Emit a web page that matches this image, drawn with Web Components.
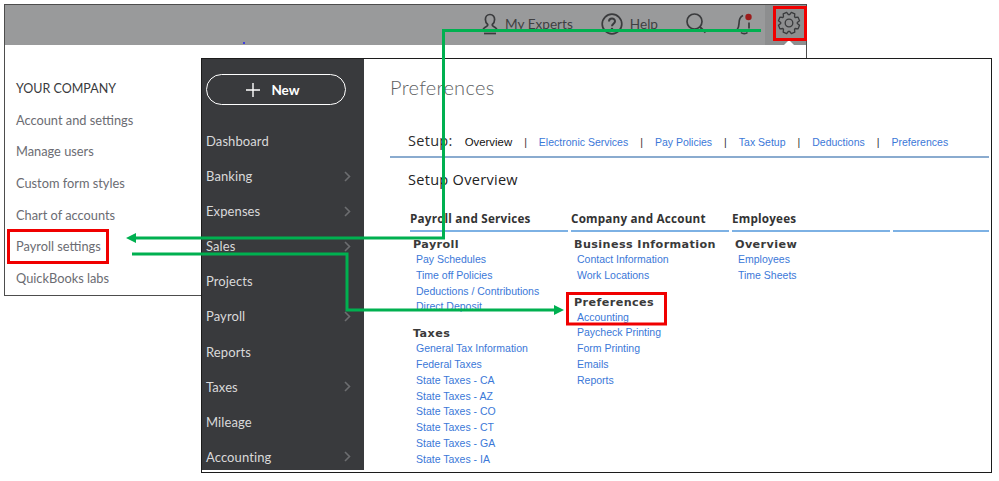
<!DOCTYPE html>
<html lang="en">
<head>
<meta charset="utf-8">
<title>Payroll settings</title>
<style>
html, body { margin: 0; padding: 0; background: #fff; }
body { width: 999px; height: 481px; position: relative; overflow: hidden; font-family: "Lato", sans-serif; }
</style>
</head>
<body>
<settings-window>
    <menu-item heading>YOUR COMPANY</menu-item>
    <menu-item>Account and settings</menu-item>
    <menu-item>Manage users</menu-item>
    <menu-item>Custom form styles</menu-item>
    <menu-item>Chart of accounts</menu-item>
    <menu-item>Payroll settings</menu-item>
    <menu-item>QuickBooks labs</menu-item>
</settings-window>

<prefs-window>
    <side-nav slot="nav">
        <nav-item>Dashboard</nav-item>
        <nav-item arrow>Banking</nav-item>
        <nav-item arrow>Expenses</nav-item>
        <nav-item arrow>Sales</nav-item>
        <nav-item>Projects</nav-item>
        <nav-item arrow>Payroll</nav-item>
        <nav-item>Reports</nav-item>
        <nav-item arrow>Taxes</nav-item>
        <nav-item>Mileage</nav-item>
        <nav-item arrow>Accounting</nav-item>
    </side-nav>
    <setup-column title="Payroll and Services">
        <link-group title="Payroll">
            <a-link>Pay Schedules</a-link>
            <a-link>Time off Policies</a-link>
            <a-link>Deductions / Contributions</a-link>
            <a-link>Direct Deposit</a-link>
        </link-group>
        <link-group title="Taxes" style="margin-top:12px">
            <a-link>General Tax Information</a-link>
            <a-link>Federal Taxes</a-link>
            <a-link>State Taxes - CA</a-link>
            <a-link>State Taxes - AZ</a-link>
            <a-link>State Taxes - CO</a-link>
            <a-link>State Taxes - CT</a-link>
            <a-link>State Taxes - GA</a-link>
            <a-link>State Taxes - IA</a-link>
        </link-group>
    </setup-column>
    <setup-column title="Company and Account">
        <link-group title="Business Information">
            <a-link>Contact Information</a-link>
            <a-link>Work Locations</a-link>
        </link-group>
        <link-group title="Preferences" style="margin-top:12px">
            <a-link>Accounting</a-link>
            <a-link>Paycheck Printing</a-link>
            <a-link>Form Printing</a-link>
            <a-link>Emails</a-link>
            <a-link>Reports</a-link>
        </link-group>
    </setup-column>
    <setup-column title="Employees">
        <link-group title="Overview">
            <a-link>Employees</a-link>
            <a-link>Time Sheets</a-link>
        </link-group>
    </setup-column>
    <setup-column></setup-column>
</prefs-window>

<callout-layer></callout-layer>

<script>
// outline of an 8 tooth gear, centered on 12,12
function gearPath(outer, inner) {
    let d = '';
    for (let i = 0; i < 8; i++) {
        const mid = (i * 45 + 22.5) * Math.PI / 180;
        [[inner, -19], [outer, -10], [outer, 10], [inner, 19]].forEach(([r, off], n) => {
            const a = mid + off * Math.PI / 180;
            d += `${i === 0 && n === 0 ? 'M' : 'L'}${(12 + r * Math.cos(a)).toFixed(2)} ${(12 + r * Math.sin(a)).toFixed(2)}`;
        });
    }
    return d + 'z';
}

class SettingsWindow extends HTMLElement {
    constructor() {
        super();
        this.attachShadow({ mode: 'open' });
        this.shadowRoot.innerHTML = `
            <style>
                :host { display: flex; flex-direction: column; position: absolute; left: 4px; top: 4px; width: 801px; height: 290px; border: 1px solid #4d4d4d; background: #fff; }
                .bar { height: 40px; background: #999a9b; display: flex; align-items: center; justify-content: flex-end; color: #3f4042; font: 13.6px "Lato", sans-serif; position: relative; box-sizing: border-box; padding-bottom: 3px; }
                .tool { display: flex; align-items: center; }
                .dot { position: absolute; left: 238px; top: 37px; width: 2px; height: 2px; background: #4040e0; }
                .gear { width: 41px; height: 40px; margin: 0 0 -3px 12px; padding: 0 0 5px 6px; box-sizing: border-box; background: #8d8e8f; display: flex; align-items: center; justify-content: center; position: relative; }
                .gear::after { content: ''; position: absolute; left: 19px; bottom: 0; border: 5px solid transparent; border-top: 0; border-bottom-color: #fff; }
                svg { display: block; fill: none; stroke: #3a3b3d; stroke-width: 1.7; stroke-linejoin: round; }
                ul { display: block; margin: 0; padding: 28px 0 0 11px; }
            </style>
            <div class="bar">
                <span class="dot"></span>
                <span class="tool" style="gap:7px;margin-right:28px">
                    <svg width="16" height="22" viewBox="0 0 16 22"><path d="M8 1.5c-3 0-4.6 2.2-4.6 5 0 2.3 1 4 2.3 5 .4 1.500-1 2-3 3-1.300.7-1.700 1.800-1.700 3.500h14c0-1.700-.4-2.800-1.700-3.500-2-1-3.400-1.500-3-3 1.300-1 2.300-2.700 2.300-5 0-2.800-1.600-5-4.600-5z"/><path d="M2 20.500h12"/></svg>
                    <span>My Experts</span>
                </span>
                <span class="tool" style="gap:7px;margin-right:28px">
                    <svg width="22" height="22" viewBox="0 0 22 22"><circle cx="11" cy="11" r="9.800"/><path d="M8 8.500c0-4 6-4 6-.2 0 2.500-3 2.500-3 5" stroke-width="2"/><circle cx="11" cy="16" r=".6" stroke-width="1.300"/></svg>
                    <span>Help</span>
                </span>
                <svg width="21" height="21" viewBox="0 0 21 21" style="margin-right:29px"><circle cx="8.500" cy="8.500" r="7.500"/><path d="M14 14l5.500 5.500" stroke-width="2"/></svg>
                <svg width="17" height="22" viewBox="0 0 17 22"><path d="M7 2.500C3.500 4 3 7 3 10.500c0 2.500-1 5-2 6.500"/><path d="M13 9.500v6"/><path d="M5 19.500c1.500 1.500 5 1.500 6.500 0"/><circle cx="12.500" cy="4" r="3.200" fill="#9c1c1c" stroke="none"/></svg>
                <span class="gear">
                    <svg width="24" height="24" viewBox="0 0 24 24" style="stroke-width:1.300"><circle cx="12" cy="12" r="3.800"/><path d="${gearPath(10.800, 8.300)}"/></svg>
                </span>
            </div>
            <ul><slot></slot></ul>
        `;
    }
}

class MenuItem extends HTMLElement {
    constructor() {
        super();
        this.attachShadow({ mode: 'open' });
        this.shadowRoot.innerHTML = `
            <style>
                :host { display: block; height: 31.7px; font: 12.8px/31.7px "Lato", sans-serif; color: #6b6c72; }
                :host([heading]) { color: #393a3d; font-size: 12.5px; }
            </style>
            <slot></slot>
        `;
    }
}

class PrefsWindow extends HTMLElement {
    constructor() {
        super();
        this.attachShadow({ mode: 'open' });
        this.shadowRoot.innerHTML = `
            <style>
                :host { display: flex; position: absolute; left: 201px; top: 58px; width: 789px; height: 413px; border: 1px solid #1c1c1c; background: #fff; align-items: flex-start; }
                main { flex: 1; min-width: 0; padding: 0 2px 0 26px; }
                h1 { margin: 16px 0 0; font: 300 20px/24px "Lato", sans-serif; letter-spacing: .3px; color: #5e5f63; }
                .tabs { display: flex; align-items: baseline; height: 22px; margin-top: 29px; padding: 3px 0 3px 18px; border-bottom: 2px solid #8aabcf; font: 10.5px "Liberation Sans", sans-serif; color: #3b78d8; }
                .label { font: 14.5px "Open Sans", sans-serif; color: #2c2c2c; margin-right: 12px; letter-spacing: .3px; }
                .cur { color: #111; font-size: 11.4px; }
                .sep { color: #333; margin: 0 12px; }
                h2 { margin: 12px 0 0 18px; font: 14.5px/20px "Open Sans", sans-serif; color: #222; letter-spacing: .3px; }
                .cols { display: grid; grid-template-columns: 158px 158px 158px 96px; gap: 3px; margin: 19px 0 0 20px; }
            </style>
            <slot name="nav"></slot>
            <main>
                <h1>Preferences</h1>
                <div class="tabs">
                    <span class="label">Setup:</span>
                    <span class="cur">Overview</span><span class="sep">|</span>
                    <span>Electronic Services</span><span class="sep">|</span>
                    <span>Pay Policies</span><span class="sep">|</span>
                    <span>Tax Setup</span><span class="sep">|</span>
                    <span>Deductions</span><span class="sep">|</span>
                    <span>Preferences</span>
                </div>
                <h2>Setup Overview</h2>
                <div class="cols"><slot></slot></div>
            </main>
        `;
    }
}

class SideNav extends HTMLElement {
    constructor() {
        super();
        this.attachShadow({ mode: 'open' });
        this.shadowRoot.innerHTML = `
            <style>
                :host { display: block; width: 162px; height: 411px; background: #393a3d; box-sizing: border-box; padding: 15px 0 0 4px; flex: none; }
                button { display: flex; align-items: center; justify-content: center; gap: 11px; width: 140px; height: 31px; padding: 0 6px 0 0; background: none; border: 1.5px solid #fff; border-radius: 16px; color: #fff; font: 700 13.5px "Lato", sans-serif; }
                .list { margin-top: 18.4px; }
                svg { display: block; }
            </style>
            <button>
                <svg width="14" height="14" viewBox="0 0 14 14" fill="none" stroke="#fff" stroke-width="1.400"><path d="M7 0v14M0 7h14"/></svg>
                <span>New</span>
            </button>
            <div class="list"><slot></slot></div>
        `;
    }
}

class NavItem extends HTMLElement {
    constructor() {
        super();
        this.attachShadow({ mode: 'open' });
        this.shadowRoot.innerHTML = `
            <style>
                :host { display: flex; align-items: center; justify-content: space-between; height: 35.1px; padding-right: 13px; font: 13px "Lato", sans-serif; letter-spacing: .1px; color: #d9d9da; }
                svg { display: none; }
                :host([arrow]) svg { display: block; }
            </style>
            <slot></slot>
            <svg width="7" height="11" viewBox="0 0 7 11" fill="none" stroke="#6c6d70" stroke-width="1.600"><path d="M1 1l4.500 4.500L1 10"/></svg>
        `;
    }
}

class SetupColumn extends HTMLElement {
    constructor() {
        super();
        this.attachShadow({ mode: 'open' });
        this.shadowRoot.innerHTML = `
            <style>
                :host { display: block; }
                .head { height: 21px; font: 700 11.7px/18px "Open Sans", sans-serif; letter-spacing: .2px; color: #333; border-bottom: 2px solid #7db1e4; margin-bottom: 6px; white-space: nowrap; }
                .body { padding-left: 3px; }
            </style>
            <div class="head">${this.getAttribute('title') || ''}</div>
            <div class="body"><slot></slot></div>
        `;
    }
}

class LinkGroup extends HTMLElement {
    constructor() {
        super();
        this.attachShadow({ mode: 'open' });
        this.shadowRoot.innerHTML = `
            <style>
                :host { display: block; }
                h3 { margin: 0; font: 700 11.2px/14px "DejaVu Sans", sans-serif; letter-spacing: .4px; color: #3a3a3a; }
                div { padding-left: 3px; }
            </style>
            <h3>${this.getAttribute('title')}</h3>
            <div><slot></slot></div>
        `;
    }
}

class ALink extends HTMLElement {
    constructor() {
        super();
        this.attachShadow({ mode: 'open' });
        this.shadowRoot.innerHTML = `
            <style>
                :host { display: block; font: 10.5px/15.8px "Liberation Sans", sans-serif; color: #3b78d8; white-space: nowrap; }
            </style>
            <slot></slot>
        `;
    }
}

// green arrows and red boxes drawn over both windows
class CalloutLayer extends HTMLElement {
    constructor() {
        super();
        this.attachShadow({ mode: 'open' });
        this.shadowRoot.innerHTML = `
            <style>
                :host { display: block; position: absolute; left: 0; top: 0; width: 999px; height: 481px; pointer-events: none; }
                svg { display: block; }
            </style>
            <svg width="999" height="481" viewBox="0 0 999 481" fill="none">
                <g stroke="#f00000" stroke-width="3">
                    <rect x="8.500" y="230.500" width="99" height="32"/>
                    <rect x="567.500" y="293.500" width="98" height="30.500"/>
                    <rect x="774.500" y="7.500" width="31" height="32"/>
                </g>
                <g stroke="#00b050" stroke-width="3">
                    <path d="M761 30.500H443.500V238H135"/>
                    <path d="M132 254H347V310H555"/>
                </g>
                <g fill="#00b050">
                    <path d="M126 238l10-5v10z"/>
                    <path d="M564 310l-10-5v10z"/>
                </g>
            </svg>
        `;
    }
}

customElements.define('settings-window', SettingsWindow);
customElements.define('menu-item', MenuItem);
customElements.define('prefs-window', PrefsWindow);
customElements.define('side-nav', SideNav);
customElements.define('nav-item', NavItem);
customElements.define('setup-column', SetupColumn);
customElements.define('link-group', LinkGroup);
customElements.define('a-link', ALink);
customElements.define('callout-layer', CalloutLayer);
</script>
</body>
</html>
